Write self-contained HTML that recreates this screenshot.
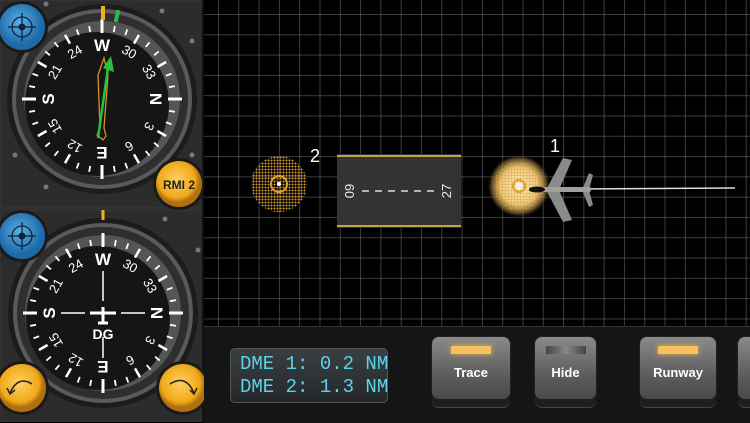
<!DOCTYPE html>
<html><head><meta charset="utf-8"><style>
html,body{margin:0;padding:0;width:750px;height:422px;overflow:hidden;background:#000;font-family:"Liberation Sans",sans-serif}
#grid{position:absolute;left:204px;top:0;width:546px;height:326px;background-color:#000;
background-image:linear-gradient(to right,rgba(120,120,120,.5) 1px,transparent 1px),linear-gradient(to bottom,rgba(120,120,120,.5) 1px,transparent 1px);
background-size:20.3px 20.3px;background-position:14px 14px}
#bottom{position:absolute;left:204px;top:326px;width:546px;height:96px;background:#151515;border-top:1px solid #333}
.btn{position:absolute;top:337px;height:62px;border-radius:7px;background:linear-gradient(#8a8a8a,#5e5e5e 60%,#4a4a4a);box-shadow:0 8px 0 #1e1e1e,0 9px 0 #444,0 0 0 1px #222;color:#fff;font-weight:bold;font-size:13px;text-align:center}
.btn span{position:absolute;left:0;right:0;top:28px}
.led{position:absolute;left:50%;top:9px;width:40px;height:8px;margin-left:-20px;background:#f4c060;box-shadow:0 0 6px #f0b040}
#dme{position:absolute;left:230px;top:348px;width:158px;height:55px;border-radius:5px;background:linear-gradient(#3a3f42,#24282a);border:1px solid #555;color:#5cd4e8;font-family:"Liberation Mono",monospace;font-size:19px;line-height:23px;padding:4px 0 0 9px;box-sizing:border-box;white-space:pre;letter-spacing:0px}
</style></head><body>
<div id="grid"></div>
<svg style="position:absolute;left:204px;top:0" width="546" height="326">
<defs>
<radialGradient id="glow"><stop offset="0" stop-color="#fff6d0"/><stop offset=".6" stop-color="#e8c880"/><stop offset=".85" stop-color="#a08040" stop-opacity=".6"/><stop offset="1" stop-color="#000" stop-opacity="0"/></radialGradient>
<pattern id="dots" width="3" height="3" patternUnits="userSpaceOnUse"><circle cx="1.5" cy="1.5" r="1" fill="#e0a030"/></pattern>
</defs>
<circle cx="75" cy="184" r="28" fill="url(#dots)"/>
<circle cx="75" cy="184" r="8" fill="none" stroke="#e0a030" stroke-width="2"/>
<circle cx="75" cy="184" r="2" fill="#fff"/>
<text x="106" y="162" fill="#fff" font-size="18" font-family="Liberation Sans">2</text>
<rect x="133" y="154" width="124" height="74" fill="#333"/>
<line x1="133" y1="156" x2="257" y2="156" stroke="#c8a040" stroke-width="2"/>
<line x1="133" y1="226" x2="257" y2="226" stroke="#c8a040" stroke-width="2"/>
<line x1="158" y1="191" x2="230" y2="191" stroke="#ddd" stroke-width="1.5" stroke-dasharray="7,6"/>
<text transform="translate(150,191) rotate(-90)" fill="#eee" font-size="13" text-anchor="middle" font-family="Liberation Sans">09</text>
<text transform="translate(247,191) rotate(-90)" fill="#eee" font-size="13" text-anchor="middle" font-family="Liberation Sans">27</text>
<circle cx="315" cy="186" r="32" fill="url(#glow)"/>
<circle cx="315" cy="186" r="25" fill="url(#dots)" opacity=".8"/>
<circle cx="315" cy="186" r="6" fill="none" stroke="#e0a030" stroke-width="2"/>
<circle cx="315" cy="186" r="3" fill="#eee"/>
<text x="346" y="152" fill="#fff" font-size="18" font-family="Liberation Sans">1</text>
<line x1="370" y1="189" x2="531" y2="188" stroke="#ddd" stroke-width="1.5"/>
<polygon points="342,190 359,158 368,160 355,190 368,220 359,222" fill="#8a8a8a"/>
<polygon points="378,190 385,173 389,175 385,190 389,205 385,207" fill="#8a8a8a"/>
<rect x="325" y="187" width="62" height="5" rx="2" fill="#a0a0a0"/>
<ellipse cx="333" cy="189.5" rx="8" ry="3" fill="#111"/>
</svg>
<div id="bottom"></div>
<div id="dme">DME 1: 0.2 NM
DME 2: 1.3 NM</div>
<div class="btn" style="left:432px;width:78px"><div class="led"></div><span>Trace</span></div>
<div class="btn" style="left:535px;width:61px"><div class="led" style="background:linear-gradient(90deg,#444,#888,#444);box-shadow:none"></div><span>Hide</span></div>
<div class="btn" style="left:640px;width:76px"><div class="led"></div><span>Runway</span></div>
<div class="btn" style="left:738px;width:30px"></div>

<svg id="left" style="position:absolute;left:0;top:0" width="204" height="422">
<defs>
<radialGradient id="org" cx=".45" cy=".4"><stop offset="0" stop-color="#ffd060"/><stop offset=".8" stop-color="#f0a818"/><stop offset="1" stop-color="#b07010"/></radialGradient>
<radialGradient id="blu" cx=".45" cy=".4"><stop offset="0" stop-color="#5ab0e8"/><stop offset="1" stop-color="#1c6aa8"/></radialGradient>
</defs>
<rect width="204" height="422" fill="#262626"/>
<rect x="0" y="0" width="204" height="208" fill="#2c2c2c" stroke="#3a3a3a"/>
<rect x="0" y="210" width="204" height="212" fill="#2c2c2c" stroke="#3a3a3a"/>
<line x1="203" y1="0" x2="203" y2="422" stroke="#111" stroke-width="2"/>
<g id="g1"></g><g id="g2"></g>
<circle cx="46" cy="4" r="2.5" fill="#777"/><circle cx="162" cy="11" r="2.5" fill="#777"/><circle cx="192" cy="41" r="2.5" fill="#777"/><circle cx="15" cy="155" r="2.5" fill="#777"/><circle cx="46" cy="187" r="2.5" fill="#777"/><circle cx="192" cy="155" r="2.5" fill="#777"/>
<circle cx="165" cy="219" r="2.5" fill="#777"/><circle cx="198" cy="250" r="2.5" fill="#777"/>
<circle cx="22" cy="27" r="26" fill="#1a1a1a"/><circle cx="22" cy="27" r="23" fill="url(#blu)"/>
<circle cx="22" cy="236" r="26" fill="#1a1a1a"/><circle cx="22" cy="236" r="23" fill="url(#blu)"/>
<g stroke="#123" stroke-width="1.3" fill="none"><circle cx="22" cy="27" r="10"/><path d="M22 13v28M8 27h28"/><circle cx="22" cy="236" r="10"/><path d="M22 222v28M8 236h28"/></g>
<circle cx="22" cy="27" r="3.5" fill="#123"/><circle cx="22" cy="236" r="3.5" fill="#123"/>
<circle cx="179" cy="184" r="26" fill="#1a1a1a"/><circle cx="179" cy="184" r="23" fill="url(#org)"/>
<text x="179" y="189" text-anchor="middle" font-weight="bold" font-size="12" fill="#222">RMI 2</text>
<circle cx="22" cy="388" r="27" fill="#1a1a1a"/><circle cx="22" cy="388" r="24" fill="url(#org)"/>
<circle cx="183" cy="388" r="27" fill="#1a1a1a"/><circle cx="183" cy="388" r="24" fill="url(#org)"/>
<path d="M10 393 Q18 375 32 384" stroke="#222" stroke-width="1.5" fill="none"/><path d="M7 388l3 6 5-4" stroke="#222" stroke-width="1.5" fill="none"/>
<path d="M170 384 Q186 374 194 393" stroke="#222" stroke-width="1.5" fill="none"/><path d="M190 390l4 4 3-6" stroke="#222" stroke-width="1.5" fill="none"/>
</svg>
<script>
function gauge(id,cx,cy,dg){
 var g=document.getElementById(id),s='';
 s+='<circle cx="'+cx+'" cy="'+cy+'" r="95" fill="#1c1c1c"/>';
 s+='<circle cx="'+cx+'" cy="'+cy+'" r="90" fill="#5a5a5a"/>';
 s+='<circle cx="'+cx+'" cy="'+cy+'" r="86" fill="#2e2e2e"/>';
 s+='<circle cx="'+cx+'" cy="'+cy+'" r="78" fill="#555"/>';
 s+='<circle cx="'+(cx-5)+'" cy="'+(cy+5)+'" r="72" fill="#151515"/>';
 for(var d=0;d<360;d+=10){var a=(d-270-90)*Math.PI/180,r1=74,r2=68,w=1.8;
  if(d%30==0){r2=64;w=2.5;}
  if(d%90==0){r1=80;r2=66;w=3;}
  s+='<line x1="'+(cx+r1*Math.cos(a))+'" y1="'+(cy+r1*Math.sin(a))+'" x2="'+(cx+r2*Math.cos(a))+'" y2="'+(cy+r2*Math.sin(a))+'" stroke="#fff" stroke-width="'+w+'"/>';}
 var lab={0:'N',30:'3',60:'6',90:'E',120:'12',150:'15',180:'S',210:'21',240:'24',270:'W',300:'30',330:'33'};
 for(var k in lab){var big=k%90==0;
  s+='<g transform="translate('+cx+','+cy+') rotate('+(k-270)+')"><text x="0" y="'+(big?-48:-50)+'" text-anchor="middle" fill="#fff" font-family="Liberation Sans" font-weight="'+(big?'bold':'normal')+'" font-size="'+(big?17:13)+'">'+lab[k]+'</text></g>';}
 if(dg){
  s+='<path d="M'+cx+' '+(cy-42)+'V'+(cy-12)+'M'+cx+' '+(cy+24)+'V'+(cy+45)+'M'+(cx-42)+' '+cy+'H'+(cx-18)+'M'+(cx+18)+' '+cy+'H'+(cx+42)+'" stroke="#fff" stroke-width="1.5"/>';
  s+='<path d="M'+(cx-13)+' '+cy+'H'+(cx+13)+'M'+cx+' '+(cy-6)+'V'+(cy+10)+'M'+(cx-5)+' '+(cy+10)+'H'+(cx+5)+'" stroke="#fff" stroke-width="3"/>';
  s+='<text x="'+cx+'" y="'+(cy+26)+'" text-anchor="middle" fill="#fff" font-weight="bold" font-size="14" font-family="Liberation Sans">DG</text>';
  s+='<rect x="'+(cx-1.5)+'" y="'+(cy-103)+'" width="3" height="10" fill="#f0b020"/>';
 } else {
  s+='<path d="M104 58 L98 75 L100 128 L97 135 L103 140 L106 136 L104 128 L108 75 Z" fill="none" stroke="#d89020" stroke-width="1.3"/>';
  s+='<path d="M98 138 L108 68" stroke="#28c040" stroke-width="2.5"/><path d="M103 68 L111 56 L114 72 Z" fill="#28c040"/>';
  s+='<rect x="101" y="6" width="4" height="14" fill="#f0b020"/><rect x="115" y="10" width="4" height="12" fill="#28c040" transform="rotate(12 117 16)"/>';
 }
 g.innerHTML=s;}
gauge('g1',102,99,false);gauge('g2',103,313,true);
</script>
</body></html>
